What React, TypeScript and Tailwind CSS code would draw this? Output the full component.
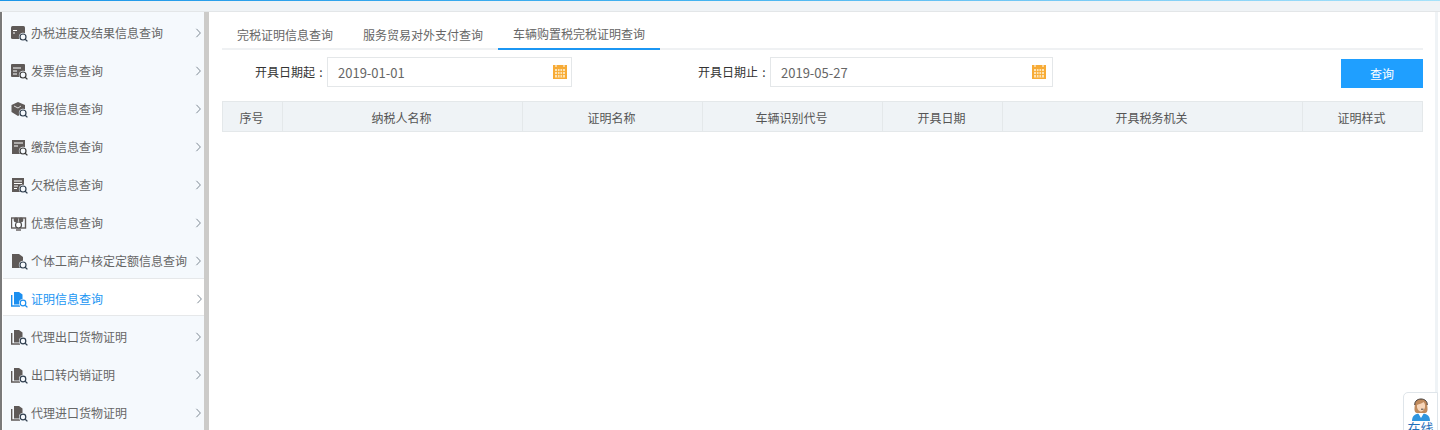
import React from "react";

const font = { fontFamily: '"Noto Sans CJK SC", "Noto Sans", sans-serif' };

type IconProps = { c: string };
const Lens = ({ c, bg }: { c: string; bg: string }) => (
  <>
    <circle cx="12" cy="12" r="4.2" fill={bg} />
    <circle cx="12" cy="12" r="3" fill={bg} stroke={c} strokeWidth="1.2" />
    <path d="M14.2 14.2 L16.4 16.4" stroke={c} strokeWidth="1.3" />
  </>
);
const bgc = "#f5f9fd";
const I1 = ({ c }: IconProps) => (
  <svg width="17" height="17" viewBox="0 0 17 17">
    <rect x="0" y="1" width="14" height="13" rx="1.5" fill="#5f5a58" />
    <path d="M2 5.5h4M2 8h2" stroke="#fff" strokeWidth="1" />
    <Lens c={c} bg={bgc} />
  </svg>
);
const I2 = ({ c }: IconProps) => (
  <svg width="17" height="17" viewBox="0 0 17 17">
    <rect x="0" y="1" width="14" height="13" rx="1" fill="#5f5a58" />
    <path d="M2 5h8M2 8h4M2 11h4" stroke="#fff" strokeWidth="1" />
    <Lens c="#3a3a3a" bg={bgc} />
  </svg>
);
const I3 = ({ c }: IconProps) => (
  <svg width="17" height="17" viewBox="0 0 17 17">
    <path d="M7 1 L14 4 V11 L7 15 L0.5 11 V4 Z" fill="#5f5a58" />
    <path d="M3 5 L7 7 L10 5" stroke="#fff" strokeWidth="0.8" fill="none" />
    <Lens c={c} bg={bgc} />
  </svg>
);
const I4 = ({ c }: IconProps) => (
  <svg width="17" height="17" viewBox="0 0 17 17">
    <rect x="1" y="1" width="13" height="14" fill="#5f5a58" />
    <path d="M3 4h9M3 7h4" stroke="#fff" strokeWidth="1.2" />
    <Lens c="#3a3a3a" bg={bgc} />
  </svg>
);
const I5 = ({ c }: IconProps) => (
  <svg width="17" height="17" viewBox="0 0 17 17">
    <rect x="1" y="1" width="12" height="14" fill="#5f5a58" />
    <path d="M3 4h8M3 6.5h8M3 9h4M3 11.5h3" stroke="#fff" strokeWidth="1" />
    <Lens c={c} bg={bgc} />
  </svg>
);
const I6 = (_: IconProps) => (
  <svg width="17" height="17" viewBox="0 0 17 17">
    <rect x="0.5" y="3" width="14" height="10" fill="none" stroke="#5f5a58" strokeWidth="1.4" />
    <circle cx="5" cy="5" r="2.4" fill="#5f5a58" />
    <circle cx="10" cy="5" r="2.4" fill="#5f5a58" />
    <circle cx="7.5" cy="10" r="3" fill="#fff" stroke="#4a4a4a" strokeWidth="1.2" />
    <path d="M5 15h5" stroke="#5f5a58" strokeWidth="1.4" />
  </svg>
);
const I7 = ({ c }: IconProps) => (
  <svg width="17" height="17" viewBox="0 0 17 17">
    <path d="M1 1 H8 L12 4 V15 H1 Z" fill="#5f5a58" />
    <Lens c={c} bg={bgc} />
  </svg>
);
const Books = ({ c, bg, ring }: { c: string; bg: string; ring: string }) => (
  <svg width="17" height="17" viewBox="0 0 17 17">
    <path d="M0.7 4 V15 H9" fill="none" stroke={c} strokeWidth="1.4" />
    <path d="M3 1 H8 L11.5 3.5 V13.5 H3 Z" fill={c} />
    <circle cx="12" cy="12" r="4" fill={bg} />
    <circle cx="12" cy="12" r="2.8" fill={bg} stroke={ring} strokeWidth="1.2" />
    <path d="M14.2 14.2 L16.4 16.4" stroke={ring} strokeWidth="1.3" />
  </svg>
);

const menu: { t: string; icon: React.ReactNode; active?: boolean }[] = [
  { t: "办税进度及结果信息查询", icon: <I1 c="#2f3e4e" /> },
  { t: "发票信息查询", icon: <I2 c="#333" /> },
  { t: "申报信息查询", icon: <I3 c="#2f3e4e" /> },
  { t: "缴款信息查询", icon: <I4 c="#333" /> },
  { t: "欠税信息查询", icon: <I5 c="#2f3e4e" /> },
  { t: "优惠信息查询", icon: <I6 c="#333" /> },
  { t: "个体工商户核定定额信息查询", icon: <I7 c="#2f3e4e" /> },
  { t: "证明信息查询", active: true, icon: <Books c="#1b8ff0" bg="#ffffff" ring="#1b8ff0" /> },
  { t: "代理出口货物证明", icon: <Books c="#5f5a58" bg="#f5f9fd" ring="#2f3e4e" /> },
  { t: "出口转内销证明", icon: <Books c="#5f5a58" bg="#f5f9fd" ring="#2f3e4e" /> },
  { t: "代理进口货物证明", icon: <Books c="#5f5a58" bg="#f5f9fd" ring="#2f3e4e" /> },
];

const Chevron = () => (
  <svg width="6" height="10" viewBox="0 0 6 10" className="shrink-0">
    <path d="M1.4 0.8 L5.4 5 L1.4 9.2" fill="none" stroke="#7f8a94" strokeWidth="1" />
  </svg>
);

const Calendar = () => (
  <svg width="14" height="14" viewBox="0 0 14 14" className="shrink-0">
    <rect width="14" height="14" fill="#f7ab36" />
    <rect x="2" y="4" width="10" height="8.5" fill="#fde3b4" />
    <path d="M2 6.5h10M2 9.5h10M4.5 4v8.5M7 4v8.5M9.5 4v8.5" stroke="#f7ab36" strokeWidth="0.9" />
    <path d="M3 0v2M11 0v2" stroke="#fff" strokeWidth="1" />
  </svg>
);

const DateField = ({ box, value }: { box: string; value: string }) => (
  <div className={`${box} h-[30px] flex items-center justify-between border border-[#e4e7e9] pl-[10px] bg-white`}>
    <span className="text-[13px] text-[#666] pt-[2px]" style={font}>{value}</span>
    <Calendar />
  </div>
);

const Label = ({ w, t }: { w: string; t: string }) => (
  <label className={`${w} h-[30px] flex items-center justify-end text-[#333]`}>
    <span>{t}</span>
    <span className="w-[12px] pl-[3px] pr-[3px] text-center">:</span>
  </label>
);

const cols: [string, string][] = [
  ["序号", "w-[60px]"],
  ["纳税人名称", "w-[240px]"],
  ["证明名称", "w-[180px]"],
  ["车辆识别代号", "w-[180px]"],
  ["开具日期", "w-[120px]"],
  ["开具税务机关", "w-[300px]"],
  ["证明样式", "flex-1"],
];

export default function App() {
  return (
    <div className="w-[1440px] h-[430px] overflow-hidden relative bg-[#eff3f6] flex flex-col text-[12px]" style={font}>
      <div className="h-[1px] shrink-0 bg-gradient-to-r from-[#1b96e8] via-[#45b4f0] to-[#a6e2fa]" />
      <div className="h-[11px] shrink-0 bg-[#eff3f6] border-b border-[#e3e6e8]" />
      <div className="flex flex-1 min-h-0">
        <div className="w-[2px] bg-[#7a7a7a] shrink-0" />
        <div className="w-px bg-white shrink-0" />
        <aside className="w-[201px] shrink-0 bg-[#f5f9fd] overflow-hidden">
          {menu.map((m) => (
            <div
              key={m.t}
              className={
                m.active
                  ? "h-[38px] flex items-center pt-[4px] pl-[8px] pr-[2px] bg-white border-y border-[#e6e8ea] text-[#1b96f3]"
                  : "h-[38px] flex items-center pt-[4px] pl-[8px] pr-[3px] text-[#666]"
              }
            >
              <span className="w-[20px] shrink-0 flex">{m.icon}</span>
              <span className="flex-1 whitespace-nowrap leading-none">{m.t}</span>
              <Chevron />
            </div>
          ))}
        </aside>
        <div className="w-[5px] shrink-0 bg-[#cccbc9]" />
        <main className="w-[1226px] shrink-0 bg-white pl-[13px] pr-[12px]">
          <div className="flex h-[38px] border-b-2 border-[#eff1f3]">
            <div className="px-[15px] h-[38px] flex items-center text-[#666] pt-[8px]">完税证明信息查询</div>
            <div className="px-[15px] h-[38px] flex items-center text-[#666] pt-[8px]">服务贸易对外支付查询</div>
            <div className="px-[15px] h-[38px] flex items-center text-[#666] pt-[8px] border-b-2 border-[#1b96f3]">车辆购置税完税证明查询</div>
          </div>
          <div className="flex items-start mt-[7px]">
            <Label w="w-[105px]" t="开具日期起" />
            <DateField box="w-[245px] pr-[4px]" value="2019-01-01" />
            <Label w="w-[198px]" t="开具日期止" />
            <DateField box="w-[283px] pr-[6px]" value="2019-05-27" />
            <button className="ml-auto mt-[2px] w-[82px] h-[29px] bg-[#1f9fff] text-white text-[12px]">查询</button>
          </div>
          <div className="flex mt-[13px] h-[31px] border border-[#e4e8ea] bg-[#eff3f6] text-[#555]">
            {cols.map(([t, w], i) => (
              <div
                key={t}
                className={`${w} ${i < cols.length - 1 ? "border-r border-[#e4e8ea]" : ""} pr-[2px] pt-[2px] flex items-center justify-center`}
              >
                {t}
              </div>
            ))}
          </div>
        </main>
        <div className="w-[3px] shrink-0 bg-[#eff3f6]" />
        <div className="flex-1 bg-white" />
      </div>
      <div className="absolute left-[1403px] top-[392px] w-[35px] h-[50px] bg-white border border-[#dfe5ea] rounded-tl-[5px] flex flex-col items-center">
        <svg width="22" height="25" viewBox="0 0 22 25" className="mt-[3px]">
          <path d="M2 25 C2 19 6 17.5 11 17.5 C16 17.5 20 19 20 25 Z" fill="#2f95de" />
          <path d="M8 17 L11 22 L14 17 Z" fill="#fff" />
          <path d="M5 7 C6 1.5 16 1.5 17 7 L17.5 12 C18 15 16.5 17 15 17 L7 17 C5.5 17 4 15 4.5 12 Z" fill="#c08a5c" />
          <path d="M7 9 C9 8 12 7.5 13.5 6 C14.5 7 15 8 15 9 C15.5 13 13 15.5 11 15.5 C9 15.5 6.5 13 7 9Z" fill="#f7d6ba" />
          <path d="M4.8 9 C4 1 18 1 17.2 9" fill="none" stroke="#3a3432" strokeWidth="1" />
          <path d="M11 13.2 h2.5" stroke="#333" strokeWidth="0.9" />
        </svg>
        <span className="text-[13px] leading-none text-[#1f6fb8]">在线</span>
      </div>
    </div>
  );
}
